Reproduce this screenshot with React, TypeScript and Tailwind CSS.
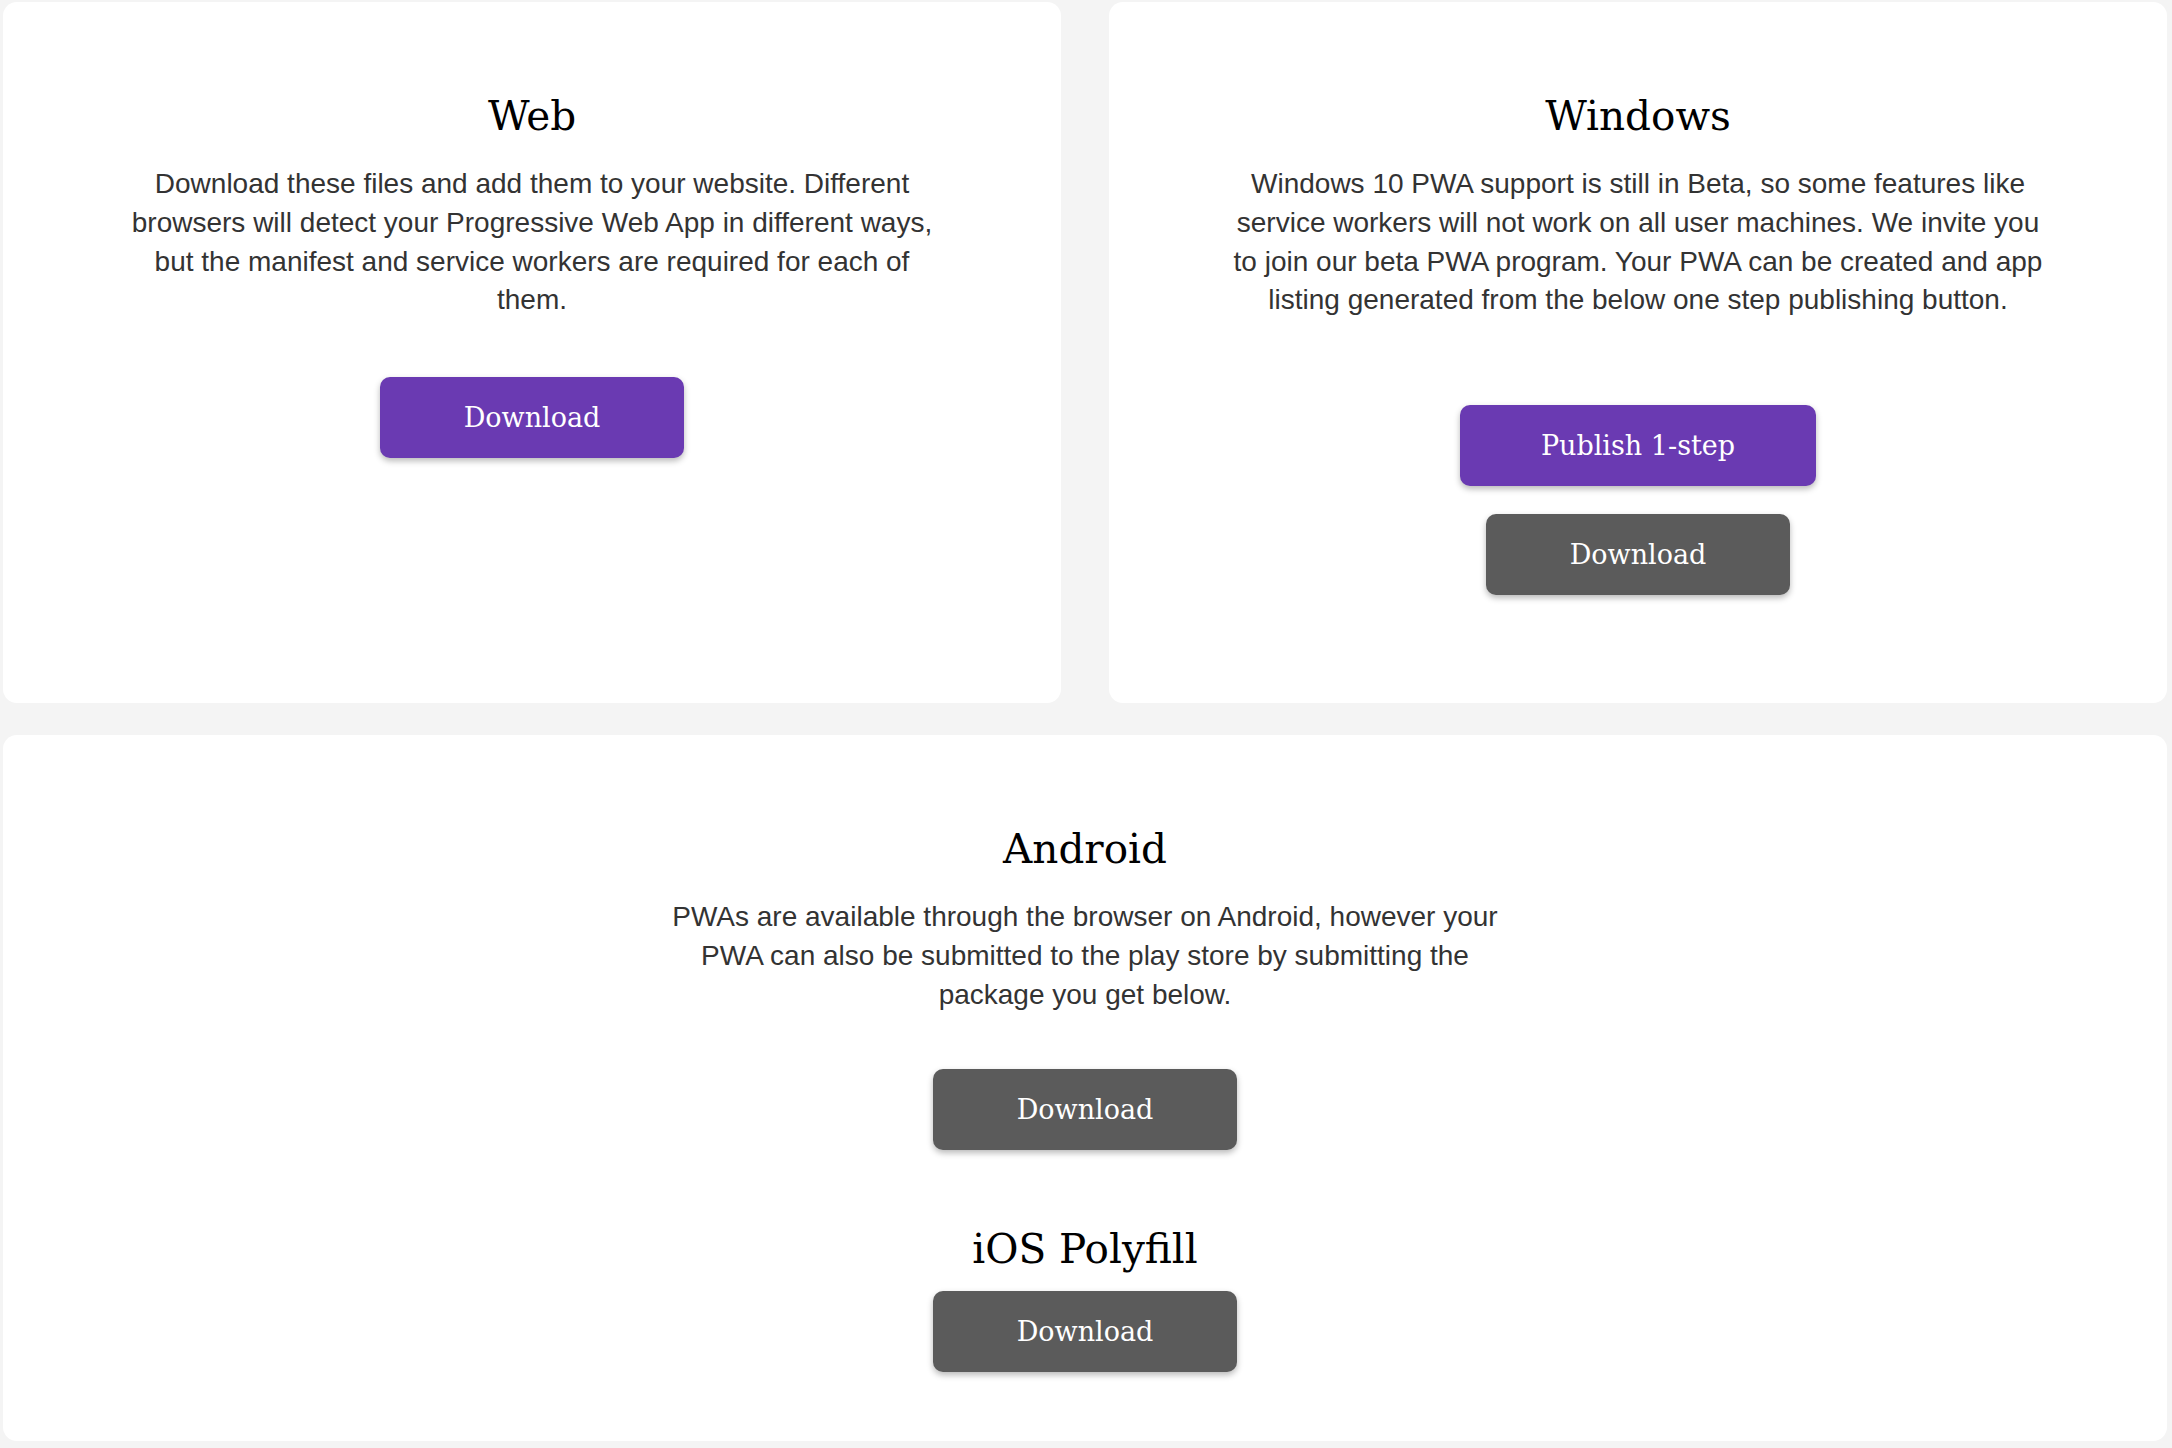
import type { ReactNode } from 'react';

const heading = "font-['DejaVu_Serif',serif] text-[40.5px] leading-[48px] font-normal text-black translate-y-[1px]";
const body = "font-['Liberation_Sans',Arial,sans-serif] text-[28px] leading-[38.8px] text-[#333333] max-w-[828px] mx-auto";
const btnBase =
  "font-['DejaVu_Serif',serif] text-[27px] text-white h-[81px] pt-[2px] rounded-[10px] shadow-[0_3px_6px_rgba(0,0,0,0.28)] flex items-center justify-center";

function PurpleButton({ children, width }: { children: ReactNode; width: string }) {
  return <button className={`${btnBase} ${width} bg-[#6a3ab2]`}>{children}</button>;
}

function GrayButton({ children }: { children: ReactNode }) {
  return <button className={`${btnBase} w-[304px] bg-[#5b5b5b]`}>{children}</button>;
}

function Card({ children, className = '' }: { children: ReactNode; className?: string }) {
  return (
    <section className={`bg-white rounded-[14px] flex flex-col items-center text-center pt-[89px] ${className}`}>
      {children}
    </section>
  );
}

export default function App() {
  return (
    <div className="min-h-[1448px] bg-[#f4f4f4] pt-[2px] pl-[3px] pr-[5px] pb-[5px]">
      <div className="grid grid-cols-2 gap-x-[48px]">
        <Card className="pb-[60px]">
          <h2 className={heading}>Web</h2>
          <p className={`${body} mt-[26px]`}>
            Download these files and add them to your website. Different browsers will detect your Progressive Web App
            in different ways, but the manifest and service workers are required for each of them.
          </p>
          <div className="mt-[57px]">
            <PurpleButton width="w-[304px]">Download</PurpleButton>
          </div>
        </Card>

        <Card className="pb-[108px]">
          <h2 className={heading}>Windows</h2>
          <p className={`${body} mt-[26px]`}>
            Windows 10 PWA support is still in Beta, so some features like service workers will not work on all user
            machines. We invite you to join our beta PWA program. Your PWA can be created and app listing generated from
            the below one step publishing button.
          </p>
          <div className="mt-[85px] flex flex-col items-center gap-[28px]">
            <PurpleButton width="w-[356px]">Publish 1-step</PurpleButton>
            <GrayButton>Download</GrayButton>
          </div>
        </Card>
      </div>

      <Card className="mt-[32px] pb-[69px]">
        <h2 className={heading}>Android</h2>
        <p className={`${body} mt-[26px]`}>
          PWAs are available through the browser on Android, however your PWA can also be submitted to the play store by
          submitting the package you get below.
        </p>
        <div className="mt-[54px]">
          <GrayButton>Download</GrayButton>
        </div>
        <h2 className={`${heading} mt-[74px]`}>iOS Polyfill</h2>
        <div className="mt-[19px]">
          <GrayButton>Download</GrayButton>
        </div>
      </Card>
    </div>
  );
}
